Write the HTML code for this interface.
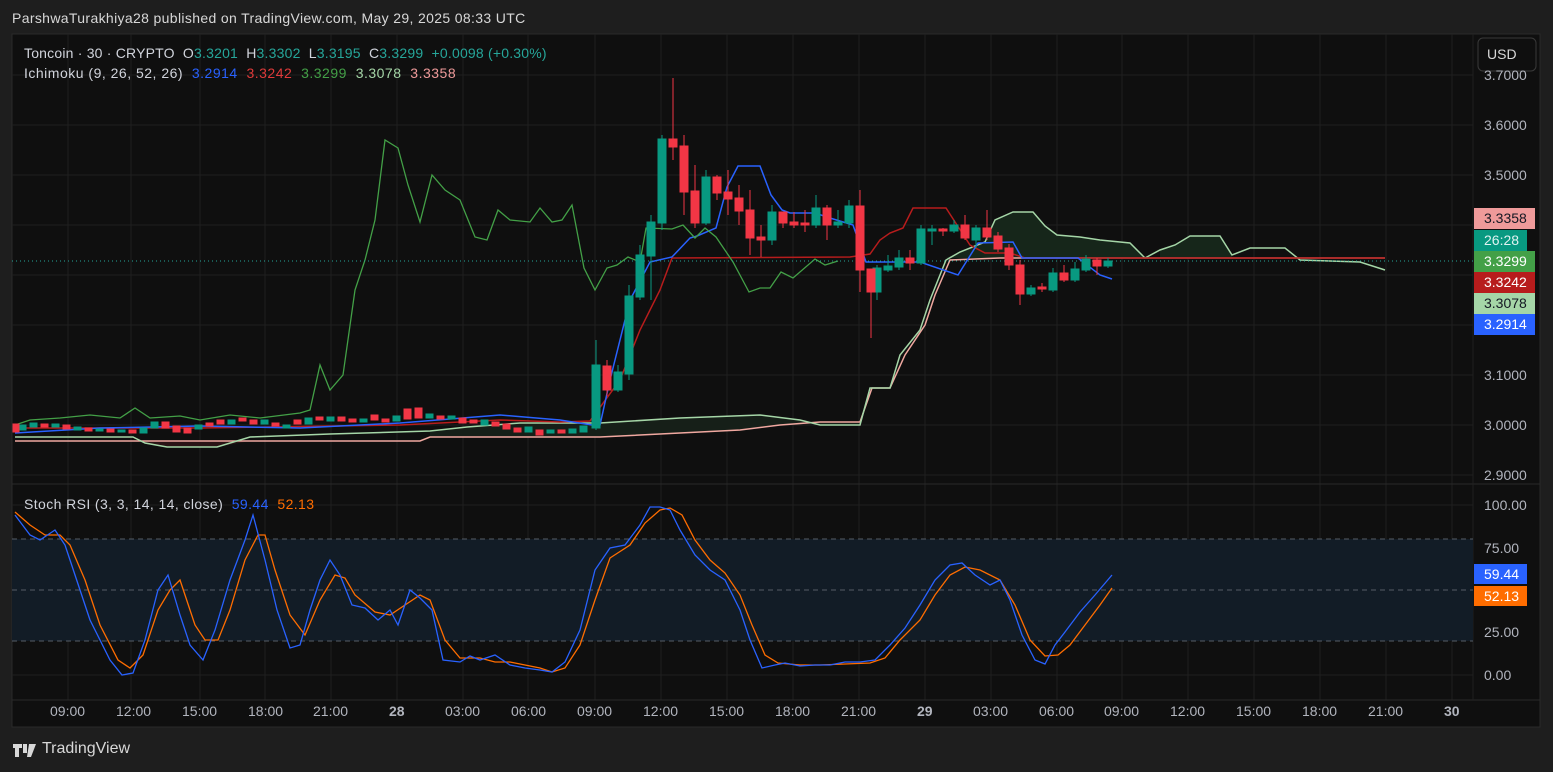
<!DOCTYPE html>
<html><head><meta charset="utf-8"><style>
body{margin:0;width:1553px;height:772px;background:#1e1e1e;font-family:"Liberation Sans",sans-serif;overflow:hidden;position:relative}
.t{position:absolute;white-space:nowrap}
</style></head><body>
<div class="t" style="left:12px;top:10px;font-size:14px;letter-spacing:0.35px;color:#d8d8d8">ParshwaTurakhiya28 published on TradingView.com, May 29, 2025 08:33 UTC</div>
<svg width="1553" height="772" style="position:absolute;left:0;top:0">
<rect x="12" y="34" width="1528" height="693" fill="#0f0f0f" stroke="#2a2a2a"/>
<g stroke="#1f1f1f" stroke-width="1">
<path d="M68 34V700M131 34V700M200 34V700M265 34V700M331 34V700M397 34V700M463 34V700M528 34V700M595 34V700M661 34V700M727 34V700M793 34V700M859 34V700M925 34V700M991 34V700M1057 34V700M1122 34V700M1188 34V700M1254 34V700M1320 34V700M1386 34V700M1452 34V700"/>
<path d="M12 75H1473M12 125H1473M12 175H1473M12 225H1473M12 275H1473M12 325H1473M12 375H1473M12 425H1473M12 475H1473M12 505H1473M12 548H1473M12 632H1473M12 675H1473"/>
</g>
<line x1="12" y1="484" x2="1540" y2="484" stroke="#2a2a2a"/>
<line x1="12" y1="700" x2="1540" y2="700" stroke="#2a2a2a"/>
<line x1="1473" y1="34" x2="1473" y2="700" stroke="#1f1f1f"/>
<!-- cloud fill -->
<polygon points="946,258 960,252 985,242 995,220 1013,212 1033,212 1045,226 1057,235 1080,237 1100,240 1130,243 1145,258" fill="#16261a"/>
<polygon points="1160,258 1160,250 1175,245 1190,236 1220,236 1232,255 1232,258" fill="#16261a"/>
<polygon points="140,441 167,447 217,447 250,441" fill="#2a1416"/>
<polygon points="430,437 600,437 680,433 740,430 780,425 820,422 860,422 860,425 820,425 800,420 760,415 680,418 600,423 520,423 467,427 430,431" fill="#161f18"/>
<!-- span B -->
<polyline fill="none" stroke="#f0a8a0" stroke-width="1.5" points="15,441 420,441 430,437 600,437 680,433 740,430 780,425 820,422 860,422 872,388 890,388 905,355 925,325 935,295 950,260 1000,258 1385,258"/>
<!-- span A -->
<polyline fill="none" stroke="#a5d6a7" stroke-width="1.5" points="15,437 133,437 145,443 167,447 217,447 250,437 330,434 430,431 467,427 520,423 600,423 680,418 760,415 800,420 820,425 860,425 870,388 890,388 900,355 920,330 930,300 946,260 960,252 985,242 995,220 1013,212 1033,212 1045,226 1057,235 1080,237 1100,240 1130,243 1145,258 1160,250 1175,245 1190,236 1220,236 1232,255 1250,248 1285,248 1300,260 1360,262 1385,270"/>
<!-- kijun -->
<polyline fill="none" stroke="#b71c1c" stroke-width="1.5" points="15,428 200,428 400,425 500,420 560,422 590,421 620,380 640,330 660,290 672,258 850,257 870,254 880,240 890,233 903,228 913,208 946,208 957,225 970,245 985,253 1010,253 1025,258 1385,258"/>
<!-- tenkan -->
<polyline fill="none" stroke="#2962ff" stroke-width="1.5" points="15,433 100,428 200,426 300,428 400,423 500,415 560,420 592,425 600,425 610,380 630,300 650,262 672,257 690,238 697,236 716,228 727,187 738,166 760,166 771,195 782,210 790,213 815,213 830,218 853,225 866,262 920,262 958,275 978,243 1013,242 1022,258 1078,258 1100,275 1112,279"/>
<!-- chikou -->
<polyline fill="none" stroke="#43a047" stroke-width="1.3" points="15,425 30,420 60,418 90,415 120,418 135,408 150,418 180,416 200,420 230,415 260,418 300,413 310,410 320,365 330,390 343,375 355,290 365,260 375,220 385,140 398,148 408,185 420,222 432,175 445,190 460,200 475,237 487,240 498,210 510,220 530,222 540,208 552,222 562,220 572,205 584,268 595,290 607,268 617,265 628,257 640,262 646,228 672,229 683,225 695,238 705,228 716,237 733,262 749,292 760,288 770,288 781,272 793,278 815,259 825,265 838,261"/>
<line x1="12" y1="261" x2="1473" y2="261" stroke="#26a69a" stroke-dasharray="1,3"/>
<!-- candles -->
<g stroke-width="1">
<g fill="#089981" stroke="#089981">
<path d="M596 340V430M607 365V395M618 365V392M629 285V380M640 245V300M651 215V300M662 135V230M706 170V225M772 205V245M816 195V228M838 210V228M849 200V228M877 265V300M888 255V272M899 250V270M921 225V265M932 225V245M954 220V233M976 225V248M1031 285V296M1053 268V292M1075 262V282M1086 255V272M1108 258V268"/>
<rect x="592" y="365" width="8" height="63"/><rect x="614" y="372" width="8" height="18"/><rect x="625" y="296" width="8" height="78"/><rect x="636" y="255" width="8" height="42"/><rect x="647" y="222" width="8" height="34"/><rect x="658" y="139" width="8" height="84"/><rect x="702" y="177" width="8" height="46"/><rect x="768" y="212" width="8" height="28"/><rect x="812" y="208" width="8" height="17"/><rect x="834" y="222" width="8" height="3"/><rect x="845" y="206" width="8" height="17"/><rect x="873" y="268" width="8" height="24"/><rect x="884" y="266" width="8" height="4"/><rect x="895" y="258" width="8" height="9"/><rect x="917" y="229" width="8" height="34"/><rect x="928" y="229" width="8" height="2"/><rect x="950" y="225" width="8" height="6"/><rect x="972" y="228" width="8" height="12"/><rect x="1027" y="288" width="8" height="6"/><rect x="1049" y="273" width="8" height="17"/><rect x="1071" y="269" width="8" height="11"/><rect x="1082" y="259" width="8" height="11"/><rect x="1104" y="261" width="8" height="5"/>
</g>
<g fill="#f23645" stroke="#f23645">
<path d="M607 360V396M673 78V160M684 135V215M695 165V228M717 175V200M728 170V215M739 185V225M750 190V255M761 225V257M783 212V228M794 212V228M805 210V232M827 205V240M860 190V292M871 269V338M910 250V270M943 228V236M965 215V240M987 210V240M998 232V252M1009 244V270M1020 260V305M1042 283V292M1064 265V282M1097 258V275"/>
<rect x="603" y="366" width="8" height="24"/><rect x="669" y="139" width="8" height="8"/><rect x="680" y="146" width="8" height="46"/><rect x="691" y="191" width="8" height="32"/><rect x="713" y="177" width="8" height="16"/><rect x="724" y="192" width="8" height="7"/><rect x="735" y="198" width="8" height="13"/><rect x="746" y="210" width="8" height="28"/><rect x="757" y="237" width="8" height="3"/><rect x="779" y="212" width="8" height="11"/><rect x="790" y="222" width="8" height="3"/><rect x="801" y="223" width="8" height="2"/><rect x="823" y="208" width="8" height="17"/><rect x="856" y="206" width="8" height="64"/><rect x="867" y="269" width="8" height="23"/><rect x="906" y="258" width="8" height="5"/><rect x="939" y="229" width="8" height="2"/><rect x="961" y="225" width="8" height="13"/><rect x="983" y="228" width="8" height="9"/><rect x="994" y="236" width="8" height="13"/><rect x="1005" y="248" width="8" height="17"/><rect x="1016" y="265" width="8" height="29"/><rect x="1038" y="287" width="8" height="2"/><rect x="1060" y="273" width="8" height="7"/><rect x="1093" y="260" width="8" height="6"/>
</g>
<g fill="#089981" stroke="#089981">
<rect x="19" y="425" width="7" height="5"/><rect x="30" y="423" width="7" height="4"/><rect x="52" y="424" width="7" height="3"/><rect x="74" y="427" width="7" height="3"/><rect x="96" y="429" width="7" height="2"/><rect x="118" y="430" width="7" height="2"/><rect x="140" y="428" width="7" height="5"/><rect x="151" y="422" width="7" height="6"/><rect x="195" y="425" width="7" height="4"/><rect x="228" y="420" width="7" height="4"/><rect x="261" y="420" width="7" height="4"/><rect x="283" y="425" width="7" height="3"/><rect x="305" y="418" width="7" height="6"/><rect x="327" y="417" width="7" height="4"/><rect x="360" y="419" width="7" height="3"/><rect x="393" y="416" width="7" height="5"/><rect x="426" y="414" width="7" height="4"/><rect x="448" y="416" width="7" height="3"/><rect x="481" y="420" width="7" height="5"/><rect x="525" y="427" width="7" height="5"/><rect x="547" y="430" width="7" height="3"/><rect x="569" y="429" width="7" height="4"/><rect x="580" y="426" width="7" height="6"/>
</g>
<g fill="#f23645" stroke="#f23645">
<rect x="13" y="424" width="6" height="8"/><rect x="41" y="424" width="7" height="3"/><rect x="63" y="425" width="7" height="4"/><rect x="85" y="428" width="7" height="3"/><rect x="107" y="429" width="7" height="3"/><rect x="129" y="430" width="7" height="3"/><rect x="162" y="422" width="7" height="6"/><rect x="173" y="426" width="7" height="6"/><rect x="184" y="428" width="7" height="5"/><rect x="206" y="423" width="7" height="3"/><rect x="217" y="420" width="7" height="4"/><rect x="239" y="418" width="7" height="3"/><rect x="250" y="420" width="7" height="4"/><rect x="272" y="423" width="7" height="3"/><rect x="294" y="420" width="7" height="4"/><rect x="316" y="417" width="7" height="3"/><rect x="338" y="417" width="7" height="4"/><rect x="349" y="419" width="7" height="3"/><rect x="371" y="415" width="7" height="5"/><rect x="382" y="419" width="7" height="3"/><rect x="404" y="409" width="7" height="10"/><rect x="415" y="408" width="7" height="10"/><rect x="437" y="416" width="7" height="3"/><rect x="459" y="418" width="7" height="5"/><rect x="470" y="420" width="7" height="3"/><rect x="492" y="422" width="7" height="4"/><rect x="503" y="424" width="7" height="5"/><rect x="514" y="428" width="7" height="4"/><rect x="536" y="430" width="7" height="5"/><rect x="558" y="430" width="7" height="3"/>
</g>
</g>
<!-- stoch panel -->
<rect x="12" y="539" width="1461" height="102" fill="#121c26"/>
<g stroke="#555d66" stroke-dasharray="5,4"><path d="M12 539H1473M12 590H1473M12 641H1473"/></g>
<polyline fill="none" stroke="#ff6d00" stroke-width="1.3" points="15,512 30,525 45,535 60,535 70,545 85,580 100,625 118,660 130,668 143,655 158,610 170,590 180,580 195,625 205,640 218,640 230,610 245,560 258,535 265,535 275,570 290,615 305,635 320,600 335,575 345,578 355,595 375,612 390,615 405,605 420,595 430,600 445,640 460,658 480,658 495,662 510,662 525,665 540,668 552,672 565,668 580,645 595,600 610,558 630,545 645,523 660,510 670,508 682,515 695,540 710,560 725,573 740,595 752,625 765,655 778,663 800,665 820,665 845,664 870,663 885,658 900,640 920,620 935,595 950,575 965,567 980,570 1000,580 1015,605 1030,640 1045,656 1058,655 1070,645 1085,625 1100,605 1112,588"/>
<polyline fill="none" stroke="#2962ff" stroke-width="1.3" points="15,515 30,535 40,540 55,530 65,545 75,575 90,620 110,660 122,675 133,673 145,640 158,590 168,575 180,615 190,645 203,660 215,630 230,580 245,540 253,515 265,560 277,610 290,648 300,645 310,610 320,580 330,560 340,575 352,605 365,608 378,620 390,610 398,625 410,590 420,598 432,610 443,660 460,662 470,656 480,660 495,655 510,665 525,668 540,670 552,672 565,662 580,630 595,570 610,548 625,545 640,525 650,507 660,507 670,510 680,530 695,555 710,570 725,580 740,610 750,640 762,668 775,665 785,663 800,666 815,665 830,665 845,662 860,662 875,660 890,645 905,628 920,605 935,580 950,565 962,563 975,575 990,585 1000,580 1010,600 1022,635 1035,660 1045,664 1055,645 1065,632 1080,612 1095,595 1112,575"/>
<!-- axis labels boxes -->
<rect x="1478" y="38" width="58" height="33" rx="5" fill="#0f0f0f" stroke="#3a3a3a"/>
<rect x="1474" y="208" width="61" height="21" fill="#ef9a9a"/>
<rect x="1474" y="230" width="53" height="21" fill="#089981"/>
<rect x="1474" y="251" width="61" height="21" fill="#43a047"/>
<rect x="1474" y="272" width="61" height="21" fill="#b71c1c"/>
<rect x="1474" y="293" width="61" height="21" fill="#a5d6a7"/>
<rect x="1474" y="314" width="61" height="21" fill="#2962ff"/>
<rect x="1474" y="564" width="53" height="20" fill="#2962ff"/>
<rect x="1474" y="586" width="53" height="20" fill="#ff6d00"/>
<!-- logo -->
<path d="M13 744h9v4h-3v9h-4v-9h-2z M23 744h4v9h-4z" fill="#d8d8d8"/><path d="M29 744h7l-5 13h-4z" fill="#d8d8d8"/>
</svg>
<div class="t" style="left:1487px;top:46px;font-size:14px;color:#d8d8d8">USD</div>
<div class="t" style="left:24px;top:45px;font-size:14px;letter-spacing:0.2px;color:#d1d4dc">Toncoin · 30 · CRYPTO&nbsp; O<span style="color:#26a69a">3.3201</span>&nbsp; H<span style="color:#26a69a">3.3302</span>&nbsp; L<span style="color:#26a69a">3.3195</span>&nbsp; C<span style="color:#26a69a">3.3299</span>&nbsp; <span style="color:#26a69a">+0.0098 (+0.30%)</span></div>
<div class="t" style="left:24px;top:65px;font-size:14px;letter-spacing:0.5px;color:#d1d4dc">Ichimoku (9, 26, 52, 26)&nbsp; <span style="color:#2962ff">3.2914</span>&nbsp; <span style="color:#e03a3a">3.3242</span>&nbsp; <span style="color:#43a047">3.3299</span>&nbsp; <span style="color:#a5d6a7">3.3078</span>&nbsp; <span style="color:#ef9a9a">3.3358</span></div>
<div class="t" style="left:24px;top:496px;font-size:14px;letter-spacing:0.4px;color:#d1d4dc">Stoch RSI (3, 3, 14, 14, close)&nbsp; <span style="color:#2962ff">59.44</span>&nbsp; <span style="color:#ff6d00">52.13</span></div>
<div style="position:absolute;left:1484px;top:0;font-size:14px;color:#b2b5be">
<div class="t" style="top:67px;">3.7000</div><div class="t" style="top:117px">3.6000</div><div class="t" style="top:167px">3.5000</div>
<div class="t" style="top:367px">3.1000</div><div class="t" style="top:417px">3.0000</div><div class="t" style="top:467px">2.9000</div>
<div class="t" style="top:210px;color:#131722">3.3358</div><div class="t" style="top:232px;color:#e0f2f1">26:28</div><div class="t" style="top:253px;color:#fff">3.3299</div><div class="t" style="top:274px;color:#fff">3.3242</div><div class="t" style="top:295px;color:#131722">3.3078</div><div class="t" style="top:316px;color:#fff">3.2914</div>
<div class="t" style="top:497px;">100.00</div><div class="t" style="top:540px">75.00</div><div class="t" style="top:624px">25.00</div><div class="t" style="top:667px">0.00</div>
<div class="t" style="top:566px;color:#fff">59.44</div><div class="t" style="top:588px;color:#fff">52.13</div>
</div>
<div style="font-size:14px;color:#b2b5be">
<div class="t" style="left:50px;top:703px">09:00</div><div class="t" style="left:116px;top:703px">12:00</div><div class="t" style="left:182px;top:703px">15:00</div><div class="t" style="left:248px;top:703px">18:00</div><div class="t" style="left:313px;top:703px">21:00</div><div class="t" style="left:389px;top:703px;font-weight:bold">28</div><div class="t" style="left:445px;top:703px">03:00</div><div class="t" style="left:511px;top:703px">06:00</div><div class="t" style="left:577px;top:703px">09:00</div><div class="t" style="left:643px;top:703px">12:00</div><div class="t" style="left:709px;top:703px">15:00</div><div class="t" style="left:775px;top:703px">18:00</div><div class="t" style="left:841px;top:703px">21:00</div><div class="t" style="left:917px;top:703px;font-weight:bold">29</div><div class="t" style="left:973px;top:703px">03:00</div><div class="t" style="left:1039px;top:703px">06:00</div><div class="t" style="left:1104px;top:703px">09:00</div><div class="t" style="left:1170px;top:703px">12:00</div><div class="t" style="left:1236px;top:703px">15:00</div><div class="t" style="left:1302px;top:703px">18:00</div><div class="t" style="left:1368px;top:703px">21:00</div><div class="t" style="left:1444px;top:703px;font-weight:bold">30</div>
</div>
<div class="t" style="left:42px;top:740px;font-size:16px;color:#d8d8d8">TradingView</div>
</body></html>
